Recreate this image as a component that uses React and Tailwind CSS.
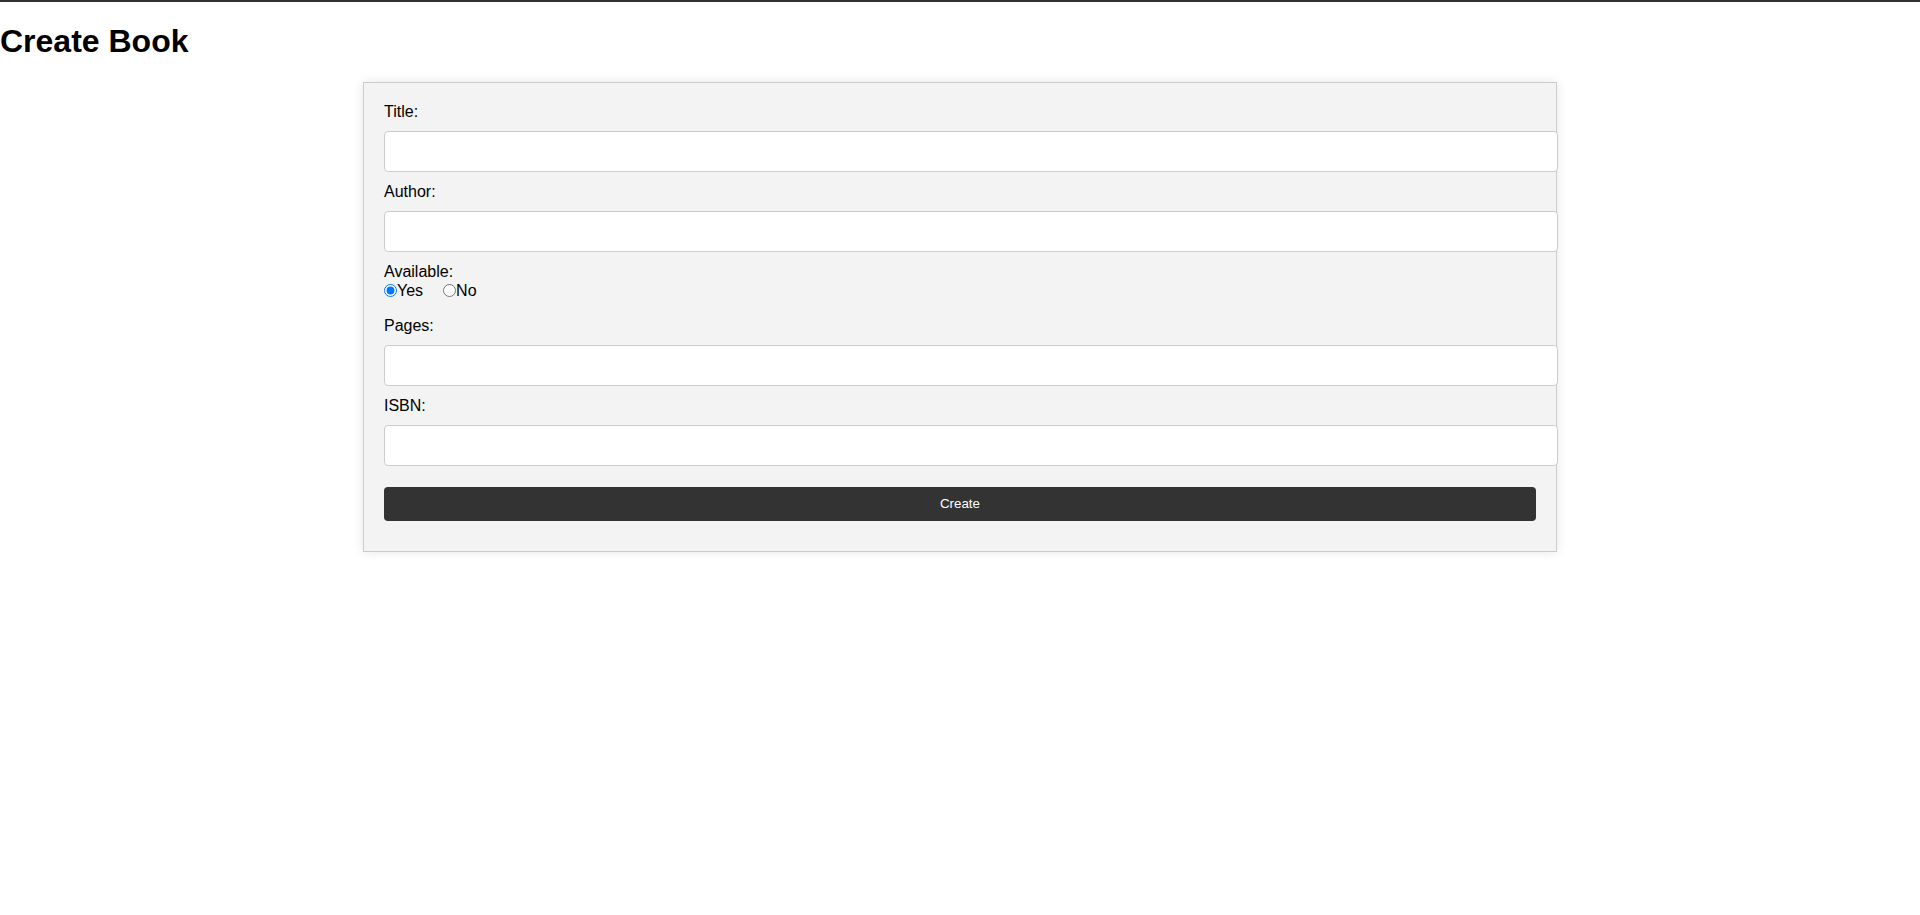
import React, { useState } from "react";

const Field = ({ label, value, onChange }) => (
  <>
    <label className="block leading-[19px] mb-[10px]">{label}</label>
    <input
      type="text"
      value={value}
      onChange={(e) => onChange(e.target.value)}
      className="block box-content w-full h-[19px] py-[10px] px-[10px] mb-[10px] bg-white border border-[#ccc] rounded-[4px] text-base outline-none"
    />
  </>
);

const App = () => {
  const [title, setTitle] = useState("");
  const [author, setAuthor] = useState("");
  const [available, setAvailable] = useState(true);
  const [pages, setPages] = useState("");
  const [isbn, setIsbn] = useState("");

  return (
    <div className="min-h-screen bg-white text-black font-['Liberation_Sans',Arial,sans-serif]">
      {/* top rule */}
      <div className="h-[2px] bg-[#333]" />

      <h1 className="my-[21.44px] text-[32px] leading-[37px] font-bold">Create Book</h1>

      {/* FORM CARD */}
      <form
        onSubmit={(e) => e.preventDefault()}
        className="box-content w-[60%] mx-auto px-5 pt-[19px] pb-5 bg-[#f3f3f3] border border-[#ccc] shadow-[0_0_10px_rgba(0,0,0,0.1)] text-base"
      >
        <Field label="Title:" value={title} onChange={setTitle} />
        <Field label="Author:" value={author} onChange={setAuthor} />

        <label className="block leading-[19px]">Available:</label>
        <div className="flex items-center leading-[19px] mb-[16px]">
          <label className="flex items-center mr-5">
            <input
              type="radio"
              name="available"
              checked={available}
              onChange={() => setAvailable(true)}
              className="m-0 w-[13px] h-[13px]"
            />
            Yes
          </label>
          <label className="flex items-center">
            <input
              type="radio"
              name="available"
              checked={!available}
              onChange={() => setAvailable(false)}
              className="m-0 w-[13px] h-[13px]"
            />
            No
          </label>
        </div>

        <Field label="Pages:" value={pages} onChange={setPages} />
        <Field label="ISBN:" value={isbn} onChange={setIsbn} />

        {/* input mb-10 collapses with this margin, so it carries the full gap */}
        <button
          type="submit"
          className="block w-full h-[34px] mt-[21px] mb-[10px] bg-[#333] text-white text-[13.33px] rounded-[4px]"
        >
          Create
        </button>
      </form>
    </div>
  );
};

export default App;
